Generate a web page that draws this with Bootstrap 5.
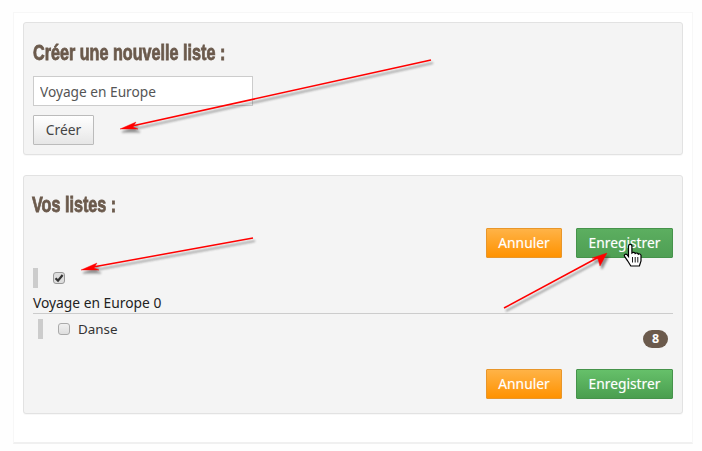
<!DOCTYPE html>
<html lang="fr">
<head>
<meta charset="utf-8">
<title>Listes</title>
<link href="https://cdn.jsdelivr.net/npm/bootstrap@5.3.0/dist/css/bootstrap.min.css" rel="stylesheet">
<style>
html,body{height:100%}
body{background:#fefefe;font-family:"Noto Sans","Open Sans",sans-serif;font-size:13.8px;color:#333;position:relative;overflow:hidden}
.sheet{width:680px;height:432px;margin:12px 0 0 13px;background:#fff;border:1px solid #f7f7f7;border-bottom:2px solid #f0f0f0;padding:9px;box-sizing:border-box}
.pane{background:#f4f4f4;border:1px solid #e2e2e2;border-radius:3px;box-shadow:0 1px 1px rgba(0,0,0,.03)}
.pane-new{height:133px;padding:17px 9px 0 9px;margin-bottom:20px}
.pane-lists{height:239px;padding:16px 9px 0 9px}
.ttl{font-family:"Liberation Sans",sans-serif;font-weight:700;font-size:22px;line-height:25px;color:#6b5a4c;margin:0;-webkit-text-stroke:.8px #6b5a4c;transform:scaleX(.735);transform-origin:left center;white-space:nowrap}
.pane-lists .ttl{margin-left:-1px}
.field{display:block;width:220px;height:30px;margin-top:11px;padding:0 6px;border:1px solid #ccc;border-radius:0;background:#fff;font:13.7px/28px "Noto Sans",sans-serif;color:#555;box-shadow:none}
.btn-make{display:block;margin-top:9px;width:61px;height:30px;padding:0;border:1px solid #bbb;border-radius:1px;background:linear-gradient(#fff,#e6e6e6);color:#444;font-size:13.8px;line-height:28px}
.act{width:97px;height:30px;padding:0;border-radius:1px;color:#fff;font-size:13.8px;line-height:28px;text-shadow:0 0 1px rgba(255,255,255,.4)}
.act-o{width:76px;background:linear-gradient(#ffb347,#ff9200);border:1px solid #e8962a}
.act-g{background:linear-gradient(#66c06a,#4a9e4f);border:1px solid #46934b}
.act-gh{background:linear-gradient(#5cae60,#4f9f54)}
.act-set{gap:14px}
.act-top{margin-top:11px}
.act-bot{margin-top:21px}
.bar-row{height:20px;margin-top:10px;border-left:5px solid #ccc;padding-left:15px}
.tick{width:12px;height:12px;border:1px solid #aaa;border-radius:3px;background:linear-gradient(#f0f0f0,#dedede);display:block;flex:none}
.tick-lg{border-color:#999;background:#ddd}
.row-name{line-height:20px;color:#222;margin-top:5px;border-bottom:1px solid #ccc;height:21px}
.sub{border-left:5px solid #ccc;height:20px;margin:5px 0 0 5px;padding-left:15px;color:#333;line-height:20px;gap:8px;font-size:13.4px}
.pill-row{margin-top:-9px;padding-right:5px}
.pill{background:#6b5a4c;color:#fff;font-size:12.5px;font-weight:700;line-height:18px;height:18px;width:25px;border-radius:9px;text-align:center}
.draw{position:absolute;left:0;top:0;pointer-events:none}
</style>
</head>
<body>
<div class="sheet">
  <div class="pane pane-new">
    <h2 class="ttl">Créer une nouvelle liste :</h2>
    <input class="field form-control" type="text" value="Voyage en Europe">
    <button class="btn btn-make" type="button">Créer</button>
  </div>
  <div class="pane pane-lists">
    <h2 class="ttl">Vos listes :</h2>
    <div class="d-flex justify-content-end act-set act-top">
      <button class="btn act act-o" type="button">Annuler</button>
      <button class="btn act act-g act-gh" type="button">Enregistrer</button>
    </div>
    <div class="bar-row d-flex align-items-center"><span class="tick tick-lg"><svg width="10" height="10" viewBox="0 0 10 10" class="d-block"><path d="M1.5 5.2 4 7.6 8.6 2" fill="none" stroke="#333" stroke-width="2.2"/></svg></span></div>
    <div class="row-name">Voyage en Europe 0</div>
    <div class="sub d-flex align-items-center"><span class="tick"></span><span>Danse</span></div>
    <div class="d-flex justify-content-end pill-row"><span class="pill">8</span></div>
    <div class="d-flex justify-content-end act-set act-bot">
      <button class="btn act act-o" type="button">Annuler</button>
      <button class="btn act act-g" type="button">Enregistrer</button>
    </div>
  </div>
</div>
<svg class="draw" width="702" height="451" viewBox="0 0 702 451" aria-hidden="true">
  <defs><filter id="sh" x="-10%" y="-50%" width="120%" height="200%"><feGaussianBlur stdDeviation="1.1"/></filter></defs>
  <g opacity=".5" filter="url(#sh)" transform="translate(2,3)" fill="#333" stroke="#333">
    <path d="M431 60 132 126" fill="none" stroke-width="1.6"/><path d="M120 129 136 122 133 127 138 129Z"/>
    <path d="M253 238 93 267" fill="none" stroke-width="1.6"/><path d="M81 270 97 263 94 268 99 270Z"/>
    <path d="M504 308 597 258" fill="none" stroke-width="1.6"/><path d="M607 253 600 266 598 259 592 258Z"/>
  </g>
  <g fill="#f00" stroke="#f00">
    <path d="M431 60 132 126" fill="none" stroke-width="1.5"/><path d="M120 129 136 122 133 127 138 129Z" stroke-width=".4"/>
    <path d="M253 238 93 267" fill="none" stroke-width="1.5"/><path d="M81 270 97 263 94 268 99 270Z" stroke-width=".4"/>
    <path d="M504 308 597 258" fill="none" stroke-width="1.5"/><path d="M607 253 600 266 598 259 592 258Z" stroke-width=".4"/>
  </g>
  <path d="M628.500 246c0-2.200 3.400-2.200 3.400 0v7c1.200-1.100 3-.8 3.300.5 1.100-.9 2.800-.5 3.100.7 1-.7 2.400-.3 2.700 1.100v5.700l-1.600 5h-8.600l-3.200-5.200-3-4.400c-1-1.700 1.200-3 2.600-1.600l1.300 1.700z" fill="#fff" stroke="#000" stroke-width="1.200"/>
  <path d="M632.500 257v5.500M635.200 257v5.500M637.800 257v5.500" stroke="#000" stroke-width=".9" fill="none"/>
</svg>
</body>
</html>
